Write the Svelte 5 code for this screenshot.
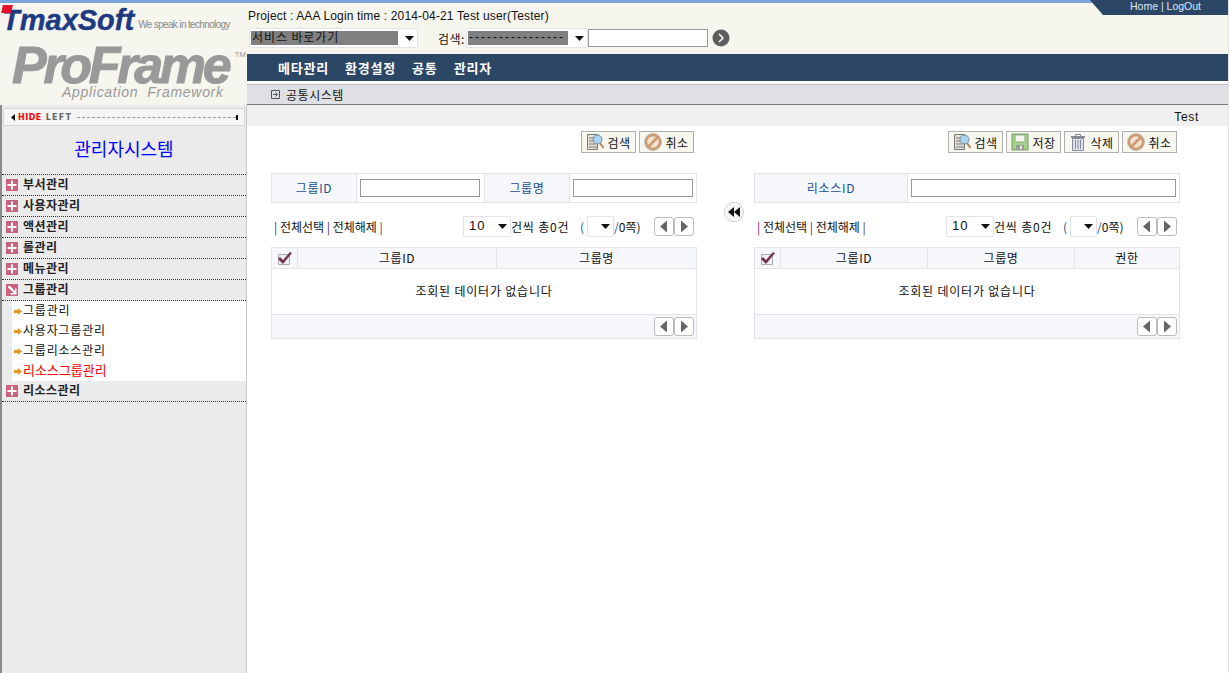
<script>
    const menus = ['부서관리', '사용자관리', '액션관리', '롤관리', '메뉴관리'];
    const subs = ['그룹관리', '사용자그룹관리', '그룹리소스관리', '리소스그룹관리'];
    const topMenus = ['메타관리', '환경설정', '공통', '관리자'];

    const panels = [
        {
            buttons: ['search', 'cancel'],
            cols: [{ name: '그룹ID', w: 199 }, { name: '그룹명', w: 201 }]
        },
        {
            buttons: ['search', 'save', 'delete', 'cancel'],
            cols: [{ name: '그룹ID', w: 147 }, { name: '그룹명', w: 147 }, { name: '권한', w: 106 }]
        }
    ];
    const labels = { search: '검색', save: '저장', delete: '삭제', cancel: '취소' };
</script>

{#snippet plus()}
    <svg class="mark" viewBox="0 0 12 12"><rect width="12" height="12" fill="#c9627e"/><path d="M5 1.500h2V5h3.500v2H7v3.500H5V7H1.500V5H5z" fill="#fff"/></svg>
{/snippet}

{#snippet pager()}
    <div class="pager">
        <span class="pg"><svg viewBox="0 0 18 17"><path d="M12 2.500v12L5 8.500z" fill="#666"/></svg></span>
        <span class="pg"><svg viewBox="0 0 18 17"><path d="M6 2.500v12l7-6z" fill="#666"/></svg></span>
    </div>
{/snippet}

{#snippet caret()}
    <svg class="caret" viewBox="0 0 9 5"><path d="M0 0h9L4.500 5z" fill="#111"/></svg>
{/snippet}

{#snippet btnIcon(kind)}
    {#if kind === 'search'}
        <svg class="bi" viewBox="0 0 18 18"><path d="M1.500 1.500h10v15h-10z" fill="#e4e2d8" stroke="#777"/><path d="M3 5h6M3 8h5M3 11h7M3 14h8" stroke="#777"/><circle cx="11.500" cy="6.500" r="4.500" fill="#a9d3ee" stroke="#6d8ea8"/><path d="M14 10l3.500 5" stroke="#b08a4e" stroke-width="2"/></svg>
    {:else if kind === 'save'}
        <svg class="bi" viewBox="0 0 18 18"><path d="M1 1h16v16H1z" fill="#a7d48c" stroke="#6f9a60"/><path d="M4 2h10v7H4z" fill="#f6f6ee" stroke="#8aa77e"/><path d="M5 12h8v5H5z" fill="#999"/><path d="M9 13h2v3H9z" fill="#eee"/></svg>
    {:else if kind === 'delete'}
        <svg class="bi" viewBox="0 0 18 18"><path d="M2 4h14" stroke="#889" stroke-width="2"/><path d="M6.500 3V1.500h5V3" fill="none" stroke="#889"/><path d="M3.500 5.500h11v12h-11z" fill="#dfe5ea" stroke="#889"/><path d="M6.500 7v9M9 7v9M11.500 7v9" stroke="#889"/></svg>
    {:else}
        <svg class="bi" viewBox="0 0 18 18"><circle cx="9" cy="9" r="7" fill="#f3e2cf" stroke="#cf9a72" stroke-width="2.500"/><path d="M4.500 13.500l9-9" stroke="#cf9a72" stroke-width="2.500"/><circle cx="9" cy="9" r="8.500" fill="none" stroke="#999" stroke-width=".6"/></svg>
    {/if}
{/snippet}

<div class="page">
    <div class="stripe"></div>
    <div class="tab">Home | LogOut</div>
    <div class="cols">
        <aside class="left">
            <div class="brand">
                <div class="tmax">
                    <span class="redbox"></span>
                    <span class="tmax-name">TmaxSoft</span>
                    <span class="slogan">We speak in technology</span>
                </div>
                <div class="proframe">ProFrame<span class="tm">TM</span></div>
                <div class="appfw">Application&nbsp; Framework</div>
            </div>
            <div class="hide">
                <svg class="tri" viewBox="0 0 4 7"><path d="M4 0v7L0 3.500z" fill="#111"/></svg>
                <span class="hide-red">HIDE</span>
                <span class="hide-gray">LEFT</span>
                <span class="dash"></span>
                <span class="stop"></span>
            </div>
            <h1 class="systitle">관리자시스템</h1>
            <nav class="menu">
                {#each menus as m}
                    <div class="mi">{@render plus()}<span>{m}</span></div>
                {/each}
                <div class="mi">
                    <svg class="mark" viewBox="0 0 12 12"><rect width="12" height="12" fill="#c9627e"/><path d="M2 2h2l5 5V4.500h1.500v6H4.500V9H8L2 3.500z" fill="#fff"/></svg>
                    <span>그룹관리</span>
                </div>
                <div class="sublist">
                    {#each subs as s, i}
                        <div class="si" class:on={i === 3}>
                            <svg class="orange" viewBox="0 0 8 7"><path d="M0 2h4V0l4 3.500L4 7V5H0z" fill="#e69528"/></svg>
                            <span>{s}</span>
                        </div>
                    {/each}
                </div>
                <div class="mi">{@render plus()}<span>리소스관리</span></div>
            </nav>
        </aside>

        <main class="right">
            <div class="info">Project : AAA Login time : 2014-04-21 Test user(Tester)</div>
            <div class="quick">
                <div class="sel sel-go">
                    <span class="hl">서비스 바로가기</span>
                    {@render caret()}
                </div>
                <span class="qlabel">검색:</span>
                <div class="sel sel-kind">
                    <span class="hl dashes">----------------</span>
                    {@render caret()}
                </div>
                <input class="qinput" />
                <svg class="go" viewBox="0 0 18 18"><circle cx="9" cy="9" r="8.500" fill="#5e5e5e"/><path d="M7 5l4 4-4 4" fill="none" stroke="#fff" stroke-width="1.500"/></svg>
            </div>
            <div class="nav">
                {#each topMenus as t}<span>{t}</span>{/each}
            </div>
            <div class="sub">
                <svg class="subicon" viewBox="0 0 9 9"><path d="M.5.500h8v8h-8z" fill="none" stroke="#555"/><path d="M2 4.500h4M4.500 2.500l2 2-2 2" fill="none" stroke="#555"/></svg>
                <span>공통시스템</span>
            </div>
            <div class="crumb">Test</div>

            <div class="panels">
                {#each panels as p, pi}
                    {#if pi === 1}
                        <div class="mid">
                            <svg class="back" viewBox="0 0 20 20"><circle cx="10" cy="10" r="9.500" fill="#fff" stroke="#ccc"/><circle cx="10" cy="10" r="8" fill="#f4f4f4"/><path d="M10 5v10L4 10zM16 5v10l-6-5z" fill="#111"/></svg>
                        </div>
                    {/if}
                    <section class="panel">
                        <div class="tools">
                            {#each p.buttons as b}
                                <span class="btn">{@render btnIcon(b)}<span>{labels[b]}</span></span>
                            {/each}
                        </div>

                        {#if pi === 0}
                            <div class="form">
                                <div class="fh">그룹ID</div>
                                <div class="fc"><input /></div>
                                <div class="fh">그룹명</div>
                                <div class="fc"><input /></div>
                            </div>
                        {:else}
                            <div class="form form-res">
                                <div class="fh">리소스ID</div>
                                <div class="fc"><input /></div>
                            </div>
                        {/if}

                        <div class="controls">
                            <div class="links"><i>|</i> 전체선택 <i>|</i> 전체해제 <i>|</i></div>
                            <div class="sel sel-size"><span>10</span>{@render caret()}</div>
                            <span class="cnt">건씩 총0건</span>
                            <span class="paren">(</span>
                            <div class="sel sel-page">{@render caret()}</div>
                            <span class="tot"><b>/</b>0쪽)</span>
                            {@render pager()}
                        </div>

                        <div class="grid">
                            <div class="ghead">
                                <div class="gcheck">
                                    <svg class="chk" viewBox="0 0 16 14"><path d="M1.500 3.500h11v10h-11z" fill="#eee" stroke="#aaa"/><path d="M3 6l3 3 7-8 2 1-9 11-5-5z" fill="#74304f"/></svg>
                                </div>
                                {#each p.cols as c}
                                    <div class="gcol" style="width:{c.w}px">{c.name}</div>
                                {/each}
                            </div>
                            <div class="empty">조회된 데이터가 없습니다</div>
                            <div class="gfoot">{@render pager()}</div>
                        </div>
                    </section>
                {/each}
            </div>
        </main>
    </div>
</div>

<style>
    :global(body) {
        margin: 0;
        background: #fff;
    }

    .page {
        position: relative;
        width: 1229px;
        height: 673px;
        overflow: hidden;
        box-sizing: border-box;
        border-right: 1px solid #e4e4e4;
        font-family: "Noto Sans CJK KR", "Liberation Sans", sans-serif;
        font-size: 12px;
        color: #111;
    }

    .stripe {
        height: 3px;
        background: #7aa5dc;
    }

    .tab {
        position: absolute;
        top: 0;
        right: 0;
        width: 138px;
        height: 15px;
        background: #2c4666;
        clip-path: polygon(0 0, 100% 0, 100% 100%, 13px 100%);
        color: #dfe8f5;
        font-family: "Liberation Sans", sans-serif;
        font-size: 10.5px;
        line-height: 13px;
        padding-left: 40px;
        box-sizing: border-box;
        white-space: nowrap;
    }

    .cols {
        display: flex;
        height: 670px;
    }

    .left {
        width: 247px;
        flex: none;
        box-sizing: border-box;
        background: #ebebeb;
        border-left: 2px solid #8c8c8c;
        border-right: 1px solid #c8c8c8;
    }

    .brand {
        height: 102px;
        background: #f6f5ee;
        margin-left: -2px;
        margin-right: -1px;
        padding-left: 4px;
        box-sizing: border-box;
        color: #999;
        font-family: "Liberation Sans", sans-serif;
        overflow: hidden;
    }

    .tmax {
        position: relative;
        display: flex;
        align-items: baseline;
        height: 34px;
        white-space: nowrap;
    }

    .redbox {
        position: absolute;
        left: -2px;
        top: 2px;
        width: 10px;
        height: 8px;
        background: #e8112d;
        transform: skewX(-12deg);
    }

    .tmax-name {
        margin-left: -2px;
        font-size: 29px;
        line-height: 35px;
        font-weight: 700;
        font-style: italic;
        color: #1d3a82;
        -webkit-text-stroke: .4px #1d3a82;
    }

    .slogan {
        margin-left: 4px;
        font-size: 10px;
        color: #888;
        letter-spacing: -.65px;
        transform: translateY(-2px);
    }

    .proframe {
        margin: 3px 0 0 8px;
        font-size: 52px;
        line-height: 50px;
        font-weight: 700;
        font-style: italic;
        color: #999;
        letter-spacing: -3.3px;
        white-space: nowrap;
        -webkit-text-stroke: 1px #999;
    }

    .tm {
        position: relative;
        top: -26px;
        margin-left: 6px;
        font-size: 8px;
        font-style: normal;
        font-weight: 400;
        letter-spacing: 0;
        line-height: 0;
        -webkit-text-stroke: 0;
    }

    .appfw {
        margin: -6px 0 0 58px;
        font-size: 14px;
        font-style: italic;
        line-height: 16px;
        letter-spacing: .7px;
        white-space: nowrap;
    }

    .hide {
        display: flex;
        align-items: center;
        height: 18px;
        margin: 3px 0 0 1px;
        padding: 0 6px 0 7px;
        box-sizing: border-box;
        width: 242px;
        background: #f5f5f5;
        border: 1px solid #d6d6d6;
        font-family: "DejaVu Sans", sans-serif;
        font-size: 8px;
        font-weight: 700;
        letter-spacing: .5px;
    }

    .tri {
        width: 4px;
        height: 7px;
        margin-right: 3px;
    }

    .hide-red {
        color: #f00;
        margin-right: 4px;
    }

    .hide-gray {
        color: #666;
        margin-right: 5px;
        letter-spacing: 1.2px;
    }

    .dash {
        flex: 1;
        border-top: 1px dashed #999;
    }

    .stop {
        width: 2px;
        height: 5px;
        background: #111;
    }

    .systitle {
        margin: 0;
        height: 49px;
        text-align: center;
        color: #00f;
        font-size: 18px;
        font-weight: 400;
        line-height: 44px;
    }

    .menu {
        margin-top: -1px;
        border-top: 1px dotted #333;
    }

    .mi {
        display: flex;
        align-items: center;
        gap: 5px;
        height: 21px;
        box-sizing: border-box;
        padding: 0 0 3px 4px;
        border-bottom: 1px dotted #333;
        font-weight: 700;
        font-size: 12px;
        letter-spacing: .45px;
        color: #222;
    }

    .mark {
        width: 12px;
        height: 12px;
        flex: none;
        margin-top: 2px;
    }

    .sublist {
        margin-left: 10px;
        background: #fff;
    }

    .si {
        display: flex;
        align-items: center;
        gap: 1px;
        height: 20px;
        box-sizing: border-box;
        padding: 0 0 3px 2px;
        letter-spacing: .8px;
    }

    .si.on {
        color: #f00;
        font-size: 13px;
        letter-spacing: 0;
    }

    .orange {
        width: 8px;
        height: 7px;
        flex: none;
        margin-top: 3px;
    }

    .right {
        flex: 1;
        min-width: 0;
    }

    .info {
        height: 23px;
        padding-left: 1px;
        font-family: "Liberation Sans", sans-serif;
        font-size: 12px;
        line-height: 26px;
        letter-spacing: .15px;
        background: #f6f5ee;
    }

    .quick {
        display: flex;
        align-items: center;
        height: 28px;
        padding: 0 0 4px 2px;
        box-sizing: border-box;
        background: #f6f5ee;
    }

    .sel {
        position: relative;
        display: flex;
        align-items: center;
        height: 20px;
        flex: none;
        box-sizing: border-box;
        background: #fff;
        border: 1px solid #e2e3ea;
        border-radius: 2px;
    }

    .caret {
        position: absolute;
        right: 3px;
        top: 7px;
        width: 9px;
        height: 5px;
    }

    .hl {
        margin-left: 1px;
        height: 14px;
        background: #808080;
        color: #111;
        line-height: 12px;
        letter-spacing: .9px;
        padding-left: 1px;
        box-sizing: border-box;
        white-space: nowrap;
    }

    .sel-go {
        width: 169px;
    }

    .sel-go .hl {
        width: 147px;
    }

    .qlabel {
        margin: 0 1px 0 20px;
        width: 27px;
        letter-spacing: .4px;
        white-space: nowrap;
    }

    .sel-kind {
        width: 122px;
    }

    .sel-kind .hl {
        width: 100px;
    }

    .hl.dashes {
        font-family: "Liberation Sans", sans-serif;
        font-size: 12px;
        letter-spacing: 2px;
        line-height: 13px;
    }

    .qinput {
        width: 120px;
        height: 18px;
        padding: 0;
        box-sizing: border-box;
        border: 1px solid #999;
        background: #fff;
        margin-right: 4px;
    }

    .go {
        width: 18px;
        height: 18px;
    }

    .nav {
        display: flex;
        gap: 16px;
        align-items: center;
        height: 27px;
        margin-bottom: 3px;
        padding-left: 31px;
        background: #2c4666;
        color: #fff;
        font-size: 13px;
        font-weight: 700;
        letter-spacing: .8px;
    }

    .sub {
        display: flex;
        align-items: center;
        gap: 6px;
        height: 21px;
        box-sizing: border-box;
        padding-left: 24px;
        background: #dfe0e3;
        border-top: 1px solid #bbb;
        border-bottom: 1px solid #777;
        letter-spacing: .55px;
    }

    .subicon {
        width: 9px;
        height: 9px;
    }

    .crumb {
        height: 21px;
        padding-right: 29px;
        background: #f0f0f0;
        text-align: right;
        font-family: "Liberation Sans", sans-serif;
        line-height: 24px;
        letter-spacing: .7px;
    }

    .panels {
        display: flex;
        padding: 5px 0 0 24px;
    }

    .panel {
        width: 426px;
        flex: none;
    }

    .mid {
        width: 57px;
        flex: none;
        padding: 71px 0 0 27px;
        box-sizing: border-box;
    }

    .back {
        display: block;
        width: 20px;
        height: 20px;
    }

    .tools {
        display: flex;
        justify-content: flex-end;
        gap: 3px;
        height: 22px;
        padding-right: 3px;
    }

    .btn {
        display: flex;
        align-items: center;
        justify-content: center;
        gap: 3px;
        width: 55px;
        box-sizing: border-box;
        background: #f8f7ef;
        border: 1px solid #b0b0b0;
        letter-spacing: .5px;
    }

    .bi {
        width: 18px;
        height: 18px;
        flex: none;
    }

    .form {
        display: grid;
        grid-template-columns: 85px 128px 85px 128px;
        margin-top: 20px;
        height: 30px;
        box-sizing: border-box;
        border: 1px solid #e3e3e8;
    }

    .form-res {
        grid-template-columns: 153px 273px;
    }

    .fh {
        display: flex;
        align-items: center;
        justify-content: center;
        padding-bottom: 2px;
        background: #f6f7fb;
        border-right: 1px solid #e3e3e8;
        color: #1c4f8c;
        letter-spacing: .7px;
    }

    .fc {
        display: flex;
        align-items: center;
        padding: 0 4px 0 3px;
        border-right: 1px solid #e3e3e8;
    }

    .fc:last-child {
        padding-right: 5px;
        border-right: 0;
    }

    .fc input {
        width: 100%;
        height: 18px;
        padding: 0;
        box-sizing: border-box;
        border: 1px solid #999;
        background: #fff;
    }

    .controls {
        position: relative;
        display: flex;
        align-items: center;
        height: 44px;
        padding-top: 3px;
        box-sizing: border-box;
    }

    .links {
        width: 192px;
        padding-left: 3px;
        box-sizing: border-box;
        flex: none;
        white-space: nowrap;
        font-size: 12px;
    }

    .links i {
        font-style: normal;
        color: #5a1a6a;
    }

    .sel-size {
        width: 48px;
        height: 21px;
        padding-left: 5px;
        font-family: "Liberation Sans", sans-serif;
        font-size: 13px;
        letter-spacing: 1px;
    }

    .sel-size span {
        margin-top: -2px;
    }

    .sel-page {
        width: 27px;
        height: 21px;
        margin-left: 3px;
    }

    .cnt {
        width: 64px;
        flex: none;
        letter-spacing: .8px;
        white-space: nowrap;
    }

    .paren {
        width: 5px;
        margin-left: 5px;
        color: #1c4f8c;
    }

    .tot {
        width: 40px;
        flex: none;
        white-space: nowrap;
    }

    .tot b {
        font-weight: 400;
        color: #1c4f8c;
    }

    .pager {
        display: flex;
        margin-left: auto;
        margin-right: 3px;
    }

    .pg {
        display: block;
        width: 20px;
        height: 19px;
        box-sizing: border-box;
        border: 1px solid #bbb;
        border-radius: 3px;
        background: #fff;
    }

    .pg svg {
        display: block;
        width: 18px;
        height: 17px;
    }

    .grid {
        border: 1px solid #e3e3e8;
        box-sizing: border-box;
    }

    .ghead {
        display: flex;
        height: 21px;
        box-sizing: border-box;
        background: #f6f7fb;
        border-bottom: 1px solid #e3e3e8;
    }

    .gcheck {
        display: flex;
        align-items: center;
        justify-content: center;
        width: 26px;
        flex: none;
        box-sizing: border-box;
        border-right: 1px solid #e3e3e8;
    }

    .chk {
        width: 16px;
        height: 14px;
    }

    .gcol {
        display: flex;
        align-items: center;
        justify-content: center;
        box-sizing: border-box;
        padding-bottom: 2px;
        border-right: 1px solid #e3e3e8;
        letter-spacing: .6px;
    }

    .gcol:last-child {
        flex: 1;
        border-right: 0;
    }

    .empty {
        display: flex;
        align-items: center;
        justify-content: center;
        height: 46px;
        box-sizing: border-box;
        padding-bottom: 3px;
        border-bottom: 1px solid #e3e3e8;
        letter-spacing: .8px;
    }

    .gfoot {
        display: flex;
        align-items: center;
        height: 23px;
        background: #f6f7fb;
    }

    .gfoot .pager {
        margin-right: 2px;
    }
</style>
